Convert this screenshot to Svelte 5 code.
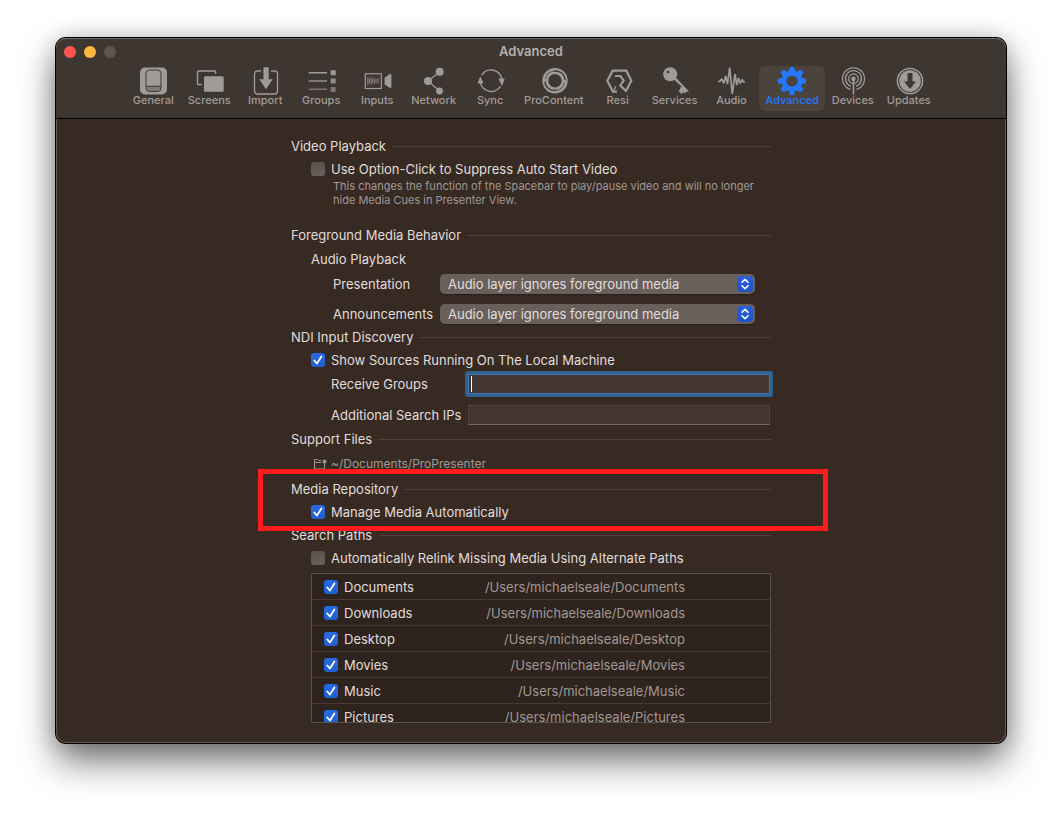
<script>
	const tabs = ['General', 'Screens', 'Import', 'Groups', 'Inputs', 'Network', 'Sync', 'ProContent', 'Resi', 'Services', 'Audio', 'Advanced', 'Devices', 'Updates'];
	const audioModes = ['Audio layer ignores foreground media', 'Foreground media stops audio layer'];

	let active = $state('Advanced');
	let optionClick = $state(false);
	let showLocal = $state(true);
	let manageMedia = $state(true);
	let relink = $state(false);
	let presentation = $state(audioModes[0]);
	let announcements = $state(audioModes[0]);
	let groups = $state('');
	let searchIps = $state('');
	let folders = $state(
		['Documents', 'Downloads', 'Desktop', 'Movies', 'Music', 'Pictures'].map((name) => ({
			name,
			path: `/Users/michaelseale/${name}`,
			on: true,
		}))
	);

	// gear teeth, one every 45 degrees
	const teeth = [0, 45, 90, 135, 180, 225, 270, 315];
</script>

{#snippet icon(name)}
	<svg class="icon" viewBox="0 0 28 28" fill="currentColor" aria-hidden="true">
		{#if name === 'General'}
			<rect x="1" y="0.5" width="27" height="27" rx="5" />
			<g fill="none" class="cut" stroke-width="1">
				<rect x="7" y="3" width="15" height="21.5" rx="3.5" />
				<path d="M7 19.3h15" />
			</g>
			<path class="cut-fill" d="M7.5 20h14v2q0 2-2.500 2H10q-2.500 0-2.500-2z" opacity="0.35" />
		{:else if name === 'Screens'}
			<path d="M6.500 17.500H3.500q-1 0-1-1V5q0-1 1-1h16q1 0 1 1v2" fill="none" stroke="currentColor" stroke-width="1.400" />
			<rect x="9" y="9.300" width="19.700" height="15.400" rx="1.500" />
		{:else if name === 'Import'}
			<path d="M10 4H6.500q-3 0-3 3v17q0 3 3 3h17q3 0 3-3V7q0-3-3-3H20" fill="none" stroke="currentColor" stroke-width="1.300" />
			<path d="M12.500 0.300h5.200v12h4L15 22.300 8.300 12.300h4.200z" />
		{:else if name === 'Groups'}
			<path d="M1.700 5h18.300v1.500H1.700zM23.700 3.300h5v5h-5z" />
			<path d="M1.700 13.300h18.300v1.500H1.700zM23.700 11.600h5v5h-5z" opacity="0.85" />
			<path d="M1.700 21.600h18.300v1.500H1.700zM23.700 19.900h5v5h-5z" opacity="0.65" />
		{:else if name === 'Inputs'}
			<rect x="2.300" y="6.800" width="16" height="14.700" fill="none" stroke="currentColor" stroke-width="1.200" />
			<path d="M4.800 10v8M6.300 11.500v5M8 9.700v8.600M9.600 12v4M11.200 10.500v7M13 12v4M15 11v6" stroke="currentColor" stroke-width="1" opacity="0.8" />
			<path d="M21.600 10.800l5-3.600q1.800-1 1.800 1v11.600q0 2-1.800 1l-5-3.300z" />
		{:else if name === 'Network'}
			<path d="M19.700 5L8 14l11.500 10" fill="none" stroke="currentColor" stroke-width="1.200" />
			<circle cx="19.700" cy="4.800" r="4" />
			<circle cx="8" cy="14" r="4" />
			<circle cx="19.500" cy="24" r="3.400" />
		{:else if name === 'Sync'}
			<g fill="none" stroke="currentColor" stroke-width="1.500">
				<path d="M5.800 8A11 11 0 0 1 26 13" />
				<path d="M24.400 19.400A11 11 0 0 1 4.200 14.400" />
			</g>
			<path d="M1.500 16.600l2.700-7.300 3.400 7z" />
			<path d="M22.500 11.500h6.200L26 19.200z" />
		{:else if name === 'ProContent'}
			<circle cx="15" cy="13.700" r="9.700" fill="none" stroke="currentColor" stroke-width="6" />
			<g fill="none" class="cut" stroke-width="1.300" stroke-linecap="round">
				<path d="M14 4.200C19 3.200 24.500 6.500 25 12.500" />
				<path d="M16 23.200C11 24.200 5.500 20.900 5 14.900" />
				<path d="M5.800 11.500C6.500 7 10 4.500 14 4.200" opacity="0.5" />
				<path d="M24.200 15.900C23.500 20.400 20 22.900 16 23.200" opacity="0.5" />
			</g>
		{:else if name === 'Resi'}
			<path d="M13 24.700H9L3.300 13.700 8.700 3.700h13.600L27.300 13.700 22 24 16.300 18.500 19.700 13.500 16.500 9H11" fill="none" stroke="currentColor" stroke-width="2.200" />
			<path d="M9.500 24.500l2.500-5.500" fill="none" stroke="currentColor" stroke-width="1.200" />
		{:else if name === 'Services'}
			<circle cx="9.200" cy="7.300" r="7" />
			<circle cx="7" cy="5" r="1.300" class="cut-fill" />
			<path d="M12.300 12l2-2L28 24.500l-3 .2-.8 1.800-2.300-1.300-1.300 2-3.300-3.700 1.800-1 .3-2.200 1.800-.2z" />
		{:else if name === 'Audio'}
			<path d="M1 14.500l2-.3 1.800-2.400 2 4.600L8.700 9l1.800 8 2.200-16.500 2.600 26.500 2.700-20 1.800 11 1.700-7 1.800 5.500 1.800-4 1.300 2.500 1.600-.5" fill="none" stroke="currentColor" stroke-width="1.700" stroke-linejoin="bevel" />
		{:else if name === 'Advanced'}
			{#each teeth as angle}
				<path d="M11.300 5l.9-4.500h3.600l.9 4.500z" transform="rotate({angle} 14 14)" stroke="currentColor" stroke-width="1" stroke-linejoin="round" />
			{/each}
			<circle cx="14" cy="14" r="8" fill="none" stroke="currentColor" stroke-width="4.800" />
		{:else if name === 'Devices'}
			<g fill="none" stroke="currentColor" stroke-width="1.200">
				<path d="M11.500 22.400a11 11 0 1 1 6 0" />
				<path d="M12 19.200a8 8 0 1 1 5 0" />
				<circle cx="14.500" cy="11.700" r="4.800" />
			</g>
			<circle cx="14.500" cy="11.700" r="2.200" />
			<path d="M13.700 12h1.600v15.500h-1.600z" />
		{:else}
			<circle cx="15" cy="14" r="12.600" fill="none" stroke="currentColor" stroke-width="1.500" />
			<circle cx="15" cy="14" r="10.800" />
			<path class="cut-fill" d="M12.500 6h5v8.500h3.500L15 22 9 14.500h3.500z" />
		{/if}
	</svg>
{/snippet}

{#snippet heading(text)}
	<h2><span>{text}</span></h2>
{/snippet}

{#snippet arrows()}
	<svg class="arrows" viewBox="0 0 16 16" aria-hidden="true">
		<path d="M5 6.300L8 3.300l3 3M5 9.700l3 3 3-3" fill="none" stroke="#fff" stroke-width="1.600" stroke-linecap="round" stroke-linejoin="round" />
	</svg>
{/snippet}

<div class="desktop">
	<main class="window">
		<header>
			<div class="titlebar">
				<div class="lights">
					<button class="light close" aria-label="Close"></button>
					<button class="light minimize" aria-label="Minimize"></button>
					<button class="light zoom" aria-label="Zoom" disabled></button>
				</div>
				<h1>Advanced</h1>
			</div>
			<nav>
				{#each tabs as tab}
					<button class="tab" class:active={tab === active} onclick={() => (active = tab)}>
						{@render icon(tab)}
						<span>{tab}</span>
					</button>
				{/each}
			</nav>
		</header>

		<div class="content">
			<section>
				{@render heading('Video Playback')}
				<label class="check"><input type="checkbox" bind:checked={optionClick} />Use Option-Click to Suppress Auto Start Video</label>
				<p class="help">This changes the function of the Spacebar to play/pause video and will no longer hide Media Cues in Presenter View.</p>
			</section>

			<section class="foreground">
				{@render heading('Foreground Media Behavior')}
				<h3>Audio Playback</h3>
				<div class="select-row">
					<label for="presentation">Presentation</label>
					<div class="select">
						<select id="presentation" bind:value={presentation}>
							{#each audioModes as mode}<option>{mode}</option>{/each}
						</select>
						{@render arrows()}
					</div>
				</div>
				<div class="select-row">
					<label for="announcements">Announcements</label>
					<div class="select">
						<select id="announcements" bind:value={announcements}>
							{#each audioModes as mode}<option>{mode}</option>{/each}
						</select>
						{@render arrows()}
					</div>
				</div>
			</section>

			<section class="ndi">
				{@render heading('NDI Input Discovery')}
				<label class="check"><input type="checkbox" bind:checked={showLocal} />Show Sources Running On The Local Machine</label>
				<div class="field-row">
					<label for="groups">Receive Groups</label>
					<div class="field current">
						<input id="groups" type="text" bind:value={groups} />
					</div>
				</div>
				<div class="field-row">
					<label for="ips">Additional Search IPs</label>
					<div class="field">
						<input id="ips" type="text" bind:value={searchIps} />
					</div>
				</div>
			</section>

			<section class="support">
				{@render heading('Support Files')}
				<a class="folder" href="#support">
					<svg viewBox="0 0 14 12" fill="none" stroke="currentColor" aria-hidden="true">
						<path d="M8 2.500H5.500l-1-1H1.500v9.500h10V8M1.500 4.500h7" />
						<circle cx="11.500" cy="3.500" r="1.600" fill="currentColor" />
						<path d="M11.500 4v4" />
					</svg>
					~/Documents/ProPresenter
				</a>
			</section>

			<section class="repository">
				{@render heading('Media Repository')}
				<label class="check"><input type="checkbox" bind:checked={manageMedia} />Manage Media Automatically</label>
				<div class="callout"></div>
			</section>

			<section class="paths">
				{@render heading('Search Paths')}
				<label class="check"><input type="checkbox" bind:checked={relink} />Automatically Relink Missing Media Using Alternate Paths</label>
				<div class="list">
					<table>
						<tbody>
							{#each folders as folder}
								<tr>
									<td><label><input type="checkbox" bind:checked={folder.on} />{folder.name}</label></td>
									<td class="path">{folder.path}</td>
									<td class="rest"></td>
								</tr>
							{/each}
						</tbody>
					</table>
				</div>
			</section>
		</div>
	</main>
</div>

<style>
	:global(body) {
		background: #fff;
	}
	.desktop {
		padding: 38px 56px 74px;
	}
	.window {
		border-radius: 10px;
		background: #372a23;
		color: #e0dddb;
		font: 13px/16px Inter, 'Liberation Sans', sans-serif;
		box-shadow:
			inset 0 0 0 1px #65594f,
			0 0 0 1px #000,
			0 18px 36px rgba(0, 0, 0, 0.55),
			0 0 22px rgba(0, 0, 0, 0.2);
	}
	h1,
	h2,
	h3,
	p {
		margin: 0;
		font-size: inherit;
		font-weight: inherit;
	}
	button,
	select,
	input {
		margin: 0;
		border: 0;
		padding: 0;
		font: inherit;
		color: inherit;
		box-sizing: border-box;
	}

	header {
		border-bottom: 1px solid #000;
		border-radius: 10px 10px 0 0;
		padding-bottom: 7px;
		background: #3e3631;
		box-shadow: inset 0 1px 0 #736b66;
	}
	.titlebar {
		display: grid;
		grid-template-columns: 1fr auto 1fr;
		align-items: center;
		height: 28px;
	}
	h1 {
		padding-bottom: 2px;
		font-weight: 600;
		color: #b5b0ad;
	}
	.lights {
		display: flex;
		gap: 8px;
		padding-left: 8px;
	}
	.light {
		width: 12px;
		height: 12px;
		border-radius: 50%;
	}
	.close {
		background: #ff5450;
	}
	.minimize {
		background: #fdb73e;
	}
	.zoom {
		background: #5e5551;
	}
	nav {
		display: flex;
		justify-content: center;
	}
	.tab {
		display: flex;
		flex-direction: column;
		align-items: center;
		justify-content: flex-start;
		min-width: 56px;
		height: 45px;
		padding: 1px 6px 0;
		border-radius: 6px;
		background: none;
		color: #a19b98;
		font-size: 11px;
		font-weight: 500;
		line-height: 12px;
	}
	.tab.active {
		background: #4b433e;
		color: #2478ff;
	}
	.icon {
		width: 28px;
		height: 28px;
		margin-bottom: -1px;
		overflow: visible;
	}
	.cut {
		stroke: #3e3631;
	}
	.cut-fill {
		fill: #3e3631;
	}

	.content {
		max-width: 480px;
		margin: 0 auto;
		padding: 19px 0 20px;
	}
	h2 {
		display: flex;
		align-items: center;
		gap: 6px;
	}
	h2::after {
		content: '';
		flex: 1;
		height: 1px;
		background: #4d4039;
	}
	h3 {
		margin: 8px 0 7px 20px;
	}
	.check {
		display: flex;
		align-items: center;
		gap: 6px;
		margin: 7px 0 0 20px;
	}
	input[type='checkbox'] {
		appearance: none;
		flex-shrink: 0;
		width: 14px;
		height: 14px;
		border-radius: 3px;
		background: linear-gradient(#5b504b, #6b615c);
	}
	input[type='checkbox']:checked {
		background:
			url("data:image/svg+xml,%3Csvg xmlns='http://www.w3.org/2000/svg' viewBox='0 0 14 14'%3E%3Cpath d='M3.300 7.500l2.600 3 4.500-7' fill='none' stroke='white' stroke-width='1.800' stroke-linecap='round' stroke-linejoin='round'/%3E%3C/svg%3E"),
			linear-gradient(#2a6ae0, #2060d0);
	}
	.help {
		margin: 2px 0 0 42px;
		color: #a09894;
		font-size: 11px;
		line-height: 14px;
	}
	.foreground {
		margin-top: 20px;
	}
	.select-row {
		display: grid;
		grid-template-columns: 107px 1fr;
		align-items: center;
		margin: 0 16px 10px 42px;
	}
	.select {
		position: relative;
		display: grid;
	}
	select {
		appearance: none;
		height: 20px;
		padding: 0 24px 0 8px;
		border-radius: 5px;
		background: #69605b;
		box-shadow: 0 1px 1px rgba(0, 0, 0, 0.3);
	}
	option {
		background: #3e3631;
	}
	.arrows {
		position: absolute;
		top: 2px;
		right: 2px;
		width: 16px;
		height: 16px;
		border-radius: 4px;
		background: linear-gradient(#2b60dd, #1f50c6);
		pointer-events: none;
	}
	.ndi {
		margin-top: -5px;
	}
	.field-row {
		display: grid;
		grid-template-columns: 137px 1fr;
		align-items: center;
		margin: 6px 1px 0 40px;
	}
	.field-row + .field-row {
		margin-top: 11px;
	}
	.field {
		position: relative;
		display: grid;
	}
	.field input {
		height: 20px;
		padding: 0 4px;
		border: 1px solid #51443d;
		border-bottom-color: #74675f;
		background: #43362f;
		outline: none;
	}
	.field.current input {
		border-color: #4379b3;
		box-shadow: 0 0 0 3px #2f628f;
		border-radius: 1px;
	}
	.current::after {
		content: '';
		position: absolute;
		left: 3px;
		top: 2px;
		width: 1px;
		height: 16px;
		background: #fff;
	}
	.support {
		margin-top: 6px;
	}
	.folder {
		display: flex;
		align-items: center;
		gap: 4px;
		margin: 9px 0 0 22px;
		color: #a09894;
		font-size: 12px;
		text-decoration: none;
	}
	.folder svg {
		width: 14px;
		height: 12px;
	}
	.repository {
		position: relative;
		margin-top: 9px;
	}
	.callout {
		position: absolute;
		inset: -12px -57px -11px -33px;
		border: 5px solid #ff1c1c;
		pointer-events: none;
		z-index: 1;
	}
	.paths {
		margin-top: 7px;
	}
	.list {
		height: 150px;
		margin: 7px 0 0 20px;
		border: 1px solid #555350;
		box-sizing: border-box;
		background: #2f231d;
		overflow: hidden;
	}
	table {
		width: 100%;
		border-collapse: collapse;
	}
	td {
		height: 25px;
		padding: 0;
		border-bottom: 1px solid #463a33;
	}
	td label {
		display: flex;
		align-items: center;
		gap: 6px;
		padding-left: 12px;
	}
	.path {
		color: #a09894;
		text-align: right;
	}
	.rest {
		width: 85px;
	}
</style>
